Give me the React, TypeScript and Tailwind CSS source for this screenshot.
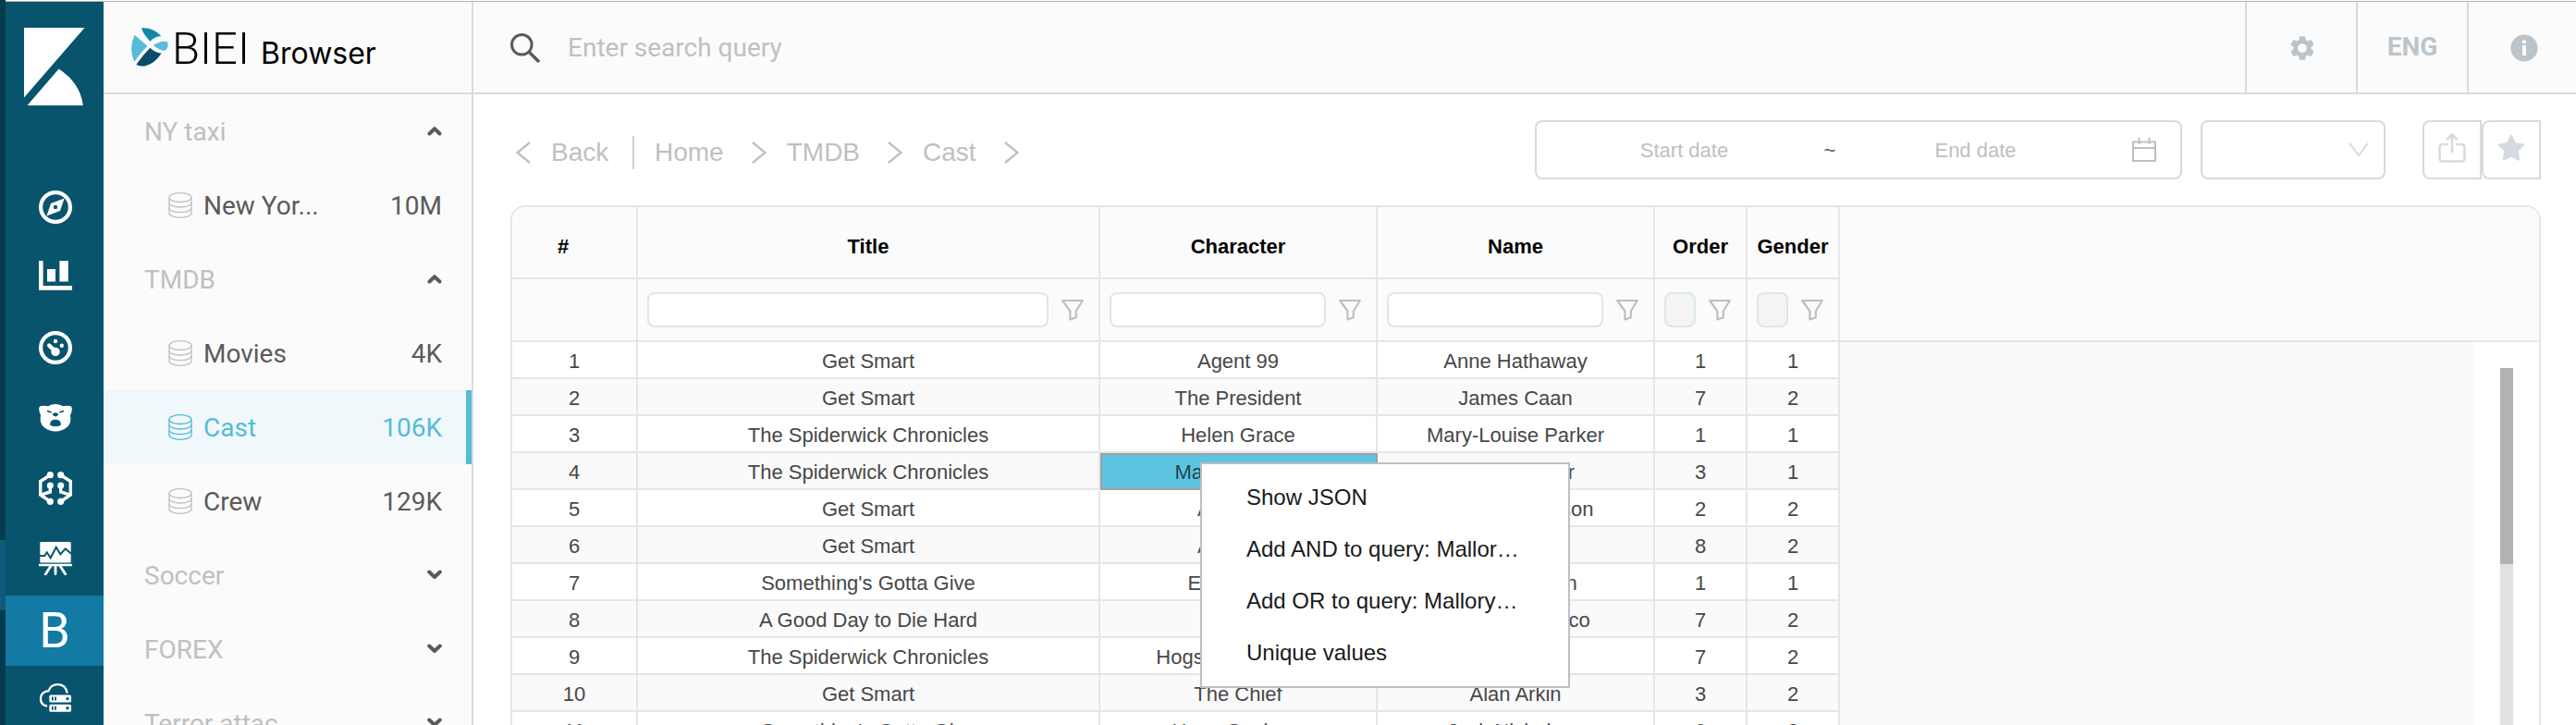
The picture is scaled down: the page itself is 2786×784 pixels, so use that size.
import React from "react";
import { MdSettings } from "react-icons/md";

const NAV_ICON = "h-9 w-9";

function CompassIcon() {
  return (
    <svg className={NAV_ICON} viewBox="0 0 36 36" fill="none">
      <circle cx="18" cy="18" r="15.9" stroke="#fff" strokeWidth="4.2" />
      <path fill="#fff" fillRule="evenodd" d="M27.6 8.4 13 14 8.4 27.6 23 22ZM18 15.8a2.2 2.2 0 1 1 0 4.4 2.2 2.2 0 0 1 0-4.4Z" />
    </svg>
  );
}

function ChartIcon() {
  return (
    <svg className={NAV_ICON} viewBox="0 0 36 36" fill="#fff">
      <path d="M0 0h4.6v27H36v4.7H0ZM9 9h9v13.4H9ZM22.4 0h9.4v22.4h-9.4Z" />
    </svg>
  );
}

function GaugeIcon() {
  return (
    <svg className={NAV_ICON} viewBox="0 0 36 36" fill="none">
      <circle cx="18" cy="18" r="15.9" stroke="#fff" strokeWidth="4.2" />
      <path d="M11.2 15.6 18 22" stroke="#fff" strokeWidth="4.4" strokeLinecap="round" />
      <circle cx="18" cy="22.4" r="4.7" fill="#fff" />
      <circle cx="18" cy="11" r="2.2" fill="#fff" />
      <circle cx="24.8" cy="15.7" r="2.2" fill="#fff" />
    </svg>
  );
}

function BearIcon() {
  return (
    <svg className={NAV_ICON} viewBox="0 -3 36 36">
      <path
        fill="#fff"
        d="M2.5 2Q0 2 .2 6q.3 3.5 1.8 6-1.5 8.500 3 12.500Q11 29.600 18 29.600T31 24.500q4.500-4 3-12.500 1.500-2.500 1.800-6Q36 2 33.500 2 29 1.500 26 2.200 22 0 18 0T10 2.200Q7 1.500 2.500 2Z"
      />
      <path d="M9.500 7.600l3.600 1.200M26.500 7.600l-3.600 1.200" stroke="#09546d" strokeWidth="1.600" strokeLinecap="round" />
      <path fill="#09546d" d="M14.600 11q1.200-1.700 3.400-1.700T21.400 11Q20 13.400 18 13.400T14.600 11ZM12 22q.4-5.200 6-5.200t6 5.200q-1 2-6 2t-6-2Z" />
    </svg>
  );
}

function LearningIcon() {
  return (
    <svg className={NAV_ICON} viewBox="0 0 36 36" fill="#fff">
      <path
        fill="none"
        stroke="#fff"
        strokeWidth="3.4"
        d="M12.300 3.700 1.700 10.500v14.500l10.600 7.300M12.300 15v7L3 24.800M23.700 3.700l10.600 6.800v14.500l-10.600 7.300M23.700 15v7l9.300 2.800"
      />
      <circle cx="12.300" cy="3.700" r="3.600" />
      <circle cx="23.700" cy="3.700" r="3.600" />
      <circle cx="12.300" cy="15" r="3.500" />
      <circle cx="23.700" cy="15" r="3.500" />
      <circle cx="12.300" cy="32.300" r="3.600" />
      <circle cx="23.700" cy="32.300" r="3.600" />
    </svg>
  );
}

function CanvasIcon() {
  return (
    <svg className={NAV_ICON} viewBox="0 0 36 36" fill="none">
      <rect x="1.300" y="0" width="33.400" height="22.400" rx="1.200" fill="#fff" />
      <path d="M0 25h36" stroke="#fff" strokeWidth="2.600" />
      <path d="M13 26 7.200 35M18 26v8.500M23 26l5.800 9" stroke="#fff" strokeWidth="2.800" strokeLinecap="round" />
      <path d="M1 15h5.300l2.400-3.700 4 6 6-11.600 4.600 7.600 5.400-6 6.300 5.400" stroke="#09546d" strokeWidth="2" />
    </svg>
  );
}

function CloudServerIcon() {
  return (
    <svg className={NAV_ICON} viewBox="0 0 36 36">
      <path
        d="M9 25.500Q2 24.500 2 17.700q0-7.500 8.500-8.500Q13 2 20.700 2.200q8.500.5 10 9.300"
        fill="none"
        stroke="#fff"
        strokeWidth="2.300"
      />
      <rect x="11.300" y="13.600" width="23.700" height="8" rx="1.600" fill="#fff" />
      <rect x="11.300" y="23.800" width="23.700" height="8" rx="1.600" fill="#fff" />
      <path d="M14.800 15.600v4M18 15.600v4M14.800 25.800v4M18 25.800v4" stroke="#09546d" strokeWidth="1.800" />
      <circle cx="31" cy="17.600" r="1.700" fill="#09546d" />
      <circle cx="31" cy="27.800" r="1.700" fill="#09546d" />
    </svg>
  );
}

function BrandMark() {
  return (
    <svg className="h-[42px] w-10" viewBox="426 90 120 126">
      <path fill="#1387a8" d="M459 91Q497 88 523 117 500 119 487 134 465 112 459 91Z" />
      <path fill="#56bcd8" d="M437 113 478 149Q455 172 436 200 416 156 437 113Z" />
      <path fill="#56bcd8" d="M498 148Q520 130 543 136 549 148 538 163 524 168 498 148Z" />
      <path fill="#0b4d69" d="M487 155Q502 170 524 173 502 205 472 214 455 217 442 209 462 180 487 155Z" />
    </svg>
  );
}

function DatabaseIcon({ active }: { active?: boolean }) {
  return (
    <svg
      className={active ? "h-7 w-[26px] text-[#55bcd8]" : "h-7 w-[26px] text-[#c0c0c0]"}
      viewBox="0 0 26 28"
      fill="none"
      stroke="currentColor"
      strokeWidth="1.3"
    >
      <ellipse cx="13" cy="5.600" rx="12" ry="4.900" />
      <path d="M1 5.600v17c0 2.600 5.400 4.700 12 4.700s12-2.100 12-4.700v-17" />
      <path d="M1 11.300c0 2.600 5.400 4.700 12 4.700s12-2.100 12-4.700M1 17c0 2.600 5.400 4.700 12 4.700S25 19.600 25 17" />
    </svg>
  );
}

function Chevron({ up }: { up?: boolean }) {
  return (
    <svg className="h-4 w-4" viewBox="0 0 16 16" fill="none" stroke="#5a5a5a" strokeWidth="4" strokeLinecap="round" strokeLinejoin="round">
      <path d={up ? "M2.500 10.500 8 5.200l5.500 5.300" : "M2.200 4.500 8 10l5.800-5.500"} />
    </svg>
  );
}

function Angle({ left }: { left?: boolean }) {
  return (
    <svg className="h-6 w-4" viewBox="0 0 16 24" fill="none" stroke="#c0c0c0" strokeWidth="2.4">
      <path d={left ? "M15 1 1.500 12 15 23" : "M1 1l13.500 11L1 23"} />
    </svg>
  );
}

function FunnelIcon() {
  return (
    <svg className="h-6 w-6" viewBox="0 0 24 24" fill="none" stroke="#bfbfbf" strokeWidth="2.2" strokeLinejoin="round">
      <path d="M1.200 2h21.600l-7 11.500v6.800L9.400 22.500V13.500Z" />
    </svg>
  );
}

type Item = { name: string; count: string; active?: boolean };

const GROUPS: { name: string; open: boolean; items: Item[] }[] = [
  { name: "NY taxi", open: true, items: [{ name: "New Yor...", count: "10M" }] },
  {
    name: "TMDB",
    open: true,
    items: [
      { name: "Movies", count: "4K" },
      { name: "Cast", count: "106K", active: true },
      { name: "Crew", count: "129K" },
    ],
  },
  { name: "Soccer", open: false, items: [] },
  { name: "FOREX", open: false, items: [] },
  { name: "Terror attac", open: false, items: [] },
];

const COLUMNS = [
  { name: "Title", disabled: false },
  { name: "Character", disabled: false },
  { name: "Name", disabled: false },
  { name: "Order", disabled: true },
  { name: "Gender", disabled: true },
];

const ROWS: string[][] = [
  ["Get Smart", "Agent 99", "Anne Hathaway", "1", "1"],
  ["Get Smart", "The President", "James Caan", "7", "2"],
  ["The Spiderwick Chronicles", "Helen Grace", "Mary-Louise Parker", "1", "1"],
  ["The Spiderwick Chronicles", "Mallory Grace", "Sarah Bolger", "3", "1"],
  ["Get Smart", "Agent 23", "Dwayne Johnson", "2", "2"],
  ["Get Smart", "Agent 91", "Terry Crews", "8", "2"],
  ["Something's Gotta Give", "Erica Barry", "Diane Keaton", "1", "1"],
  ["A Good Day to Die Hard", "Murphy", "Amaury Nolasco", "7", "2"],
  ["The Spiderwick Chronicles", "Hogsqueal (voice)", "Seth Rogen", "7", "2"],
  ["Get Smart", "The Chief", "Alan Arkin", "3", "2"],
  ["Something's Gotta Give", "Harry Sanborn", "Jack Nicholson", "0", "2"],
];

const MENU = ["Show JSON", "Add AND to query: Mallor…", "Add OR to query: Mallory…", "Unique values"];

const APPS = [
  { name: "Discover", Icon: CompassIcon },
  { name: "Visualize", Icon: ChartIcon },
  { name: "Dashboard", Icon: GaugeIcon },
  { name: "Timelion", Icon: BearIcon },
  { name: "Machine learning", Icon: LearningIcon },
  { name: "Canvas", Icon: CanvasIcon },
];

function AppRail() {
  return (
    <nav aria-label="Applications" className="flex w-[106px] shrink-0 flex-col bg-[#09546d]">
      <a href="#home" aria-label="Kibana" className="block h-[186px] shrink-0 pl-5 pt-7">
        <svg className="h-[84px] w-[66px]" viewBox="0 0 66 84" fill="#fff">
          <path d="M0 0h65.500L0 75.500ZM37.600 44.600Q61 60 63.800 84H3.500Z" />
        </svg>
      </a>
      {APPS.map(({ name, Icon }) => (
        <a key={name} href="#app" aria-label={name} className="flex h-[76px] shrink-0 items-center justify-center pb-1 pl-0.5">
          <Icon />
        </a>
      ))}
      <a href="#browser" className="flex h-[76px] shrink-0 items-center justify-center bg-[#127aa3] text-[54px] leading-none text-white">
        B
      </a>
      <a href="#infra" aria-label="Infrastructure" className="flex h-[76px] shrink-0 items-center justify-center pb-1 pl-0.5">
        <CloudServerIcon />
      </a>
    </nav>
  );
}

function Sidebar() {
  return (
    <aside className="w-[400px] shrink-0 overflow-hidden border-r-2 border-[#d6dbe2] bg-[#fbfbfb] text-[28px] text-[#5a5a5a]">
      {GROUPS.map((group) => (
        <section key={group.name}>
          <button type="button" aria-expanded={group.open} className="flex h-20 w-full items-center justify-between pl-11 pr-8 text-[#c0c0c0]">
            <span className="pt-0.5">{group.name}</span>
            <Chevron up={group.open} />
          </button>
          {group.items.map((item) => (
            <a
              key={item.name}
              href="#index"
              className={
                item.active
                  ? "flex h-20 items-center border-r-[6px] border-[#55bcd8] bg-[#f0f8fb] pl-[70px] pr-[26px] text-[#55bcd8]"
                  : "flex h-20 items-center pl-[70px] pr-8"
              }
            >
              <DatabaseIcon active={item.active} />
              <span className="ml-3 pt-0.5">{item.name}</span>
              <span className="ml-auto pt-0.5">{item.count}</span>
            </a>
          ))}
        </section>
      ))}
    </aside>
  );
}

function Header() {
  return (
    <header className="flex h-[100px] shrink-0 border-b-2 border-[#d6dbe2] bg-[#fbfbfb]">
      <div className="flex w-[400px] shrink-0 items-center border-r-2 border-[#d6dbe2] pl-[30px] text-black">
        <BrandMark />
        <span className="flex items-baseline gap-3 pl-1 pt-0.5">
          <span className="text-[49px] font-light leading-none">BIEI</span>
          <span className="font-['Inter',sans-serif] text-[32px] leading-none">Browser</span>
        </span>
      </div>
      <label className="flex min-w-0 flex-1 items-center pl-10 pt-0.5">
        <svg className="h-8 w-8" viewBox="0 0 32 32" fill="none" stroke="#5a5a5a" strokeWidth="3">
          <circle cx="12.300" cy="12.300" r="10.800" />
          <path d="M20 20l11 11" strokeWidth="3.400" />
        </svg>
        <input
          type="text"
          aria-label="Search"
          placeholder="Enter search query"
          className="ml-[30px] min-w-0 flex-1 bg-transparent text-[28px] text-[#5a5a5a] outline-none placeholder:text-[#c0c0c0]"
        />
      </label>
      <button type="button" aria-label="Settings" className="flex w-[120px] items-center justify-center border-l-2 border-[#d6dbe2] pl-0.5 pt-0.5">
        <MdSettings className="h-8 w-8 text-[#bcc4cb]" />
      </button>
      <button type="button" className="w-[120px] border-l-2 border-[#d6dbe2] text-[28px] font-bold text-[#bcc4cb]">
        ENG
      </button>
      <button type="button" aria-label="Information" className="flex w-[118px] items-center justify-center border-l-2 border-[#d6dbe2] pl-1 pt-0.5">
        <svg className="h-[30px] w-[30px]" viewBox="0 0 30 30">
          <circle cx="15" cy="15" r="14.600" fill="#bcc4cb" />
          <circle cx="15" cy="8.300" r="2.100" fill="#fff" />
          <path d="M15 12v11" stroke="#fff" strokeWidth="3.800" />
        </svg>
      </button>
    </header>
  );
}

function Toolbar() {
  return (
    <div className="flex h-[120px] shrink-0 items-center">
      <nav aria-label="Breadcrumb" className="flex items-center pl-1.5 pt-1.5 text-[28px] text-[#c0c0c0]">
        <a href="#back" className="flex w-[126px] items-center gap-[22px]">
          <Angle left />
          Back
        </a>
        <span className="h-9 w-0.5 bg-[#d0d0d0]" />
        {["Home", "TMDB", "Cast"].map((crumb) => (
          <span key={crumb} className="flex items-center">
            <a href="#crumb" className="pl-[22px]">
              {crumb}
            </a>
            <span className="pl-[30px]">
              <Angle />
            </span>
          </span>
        ))}
      </nav>

      <div className="ml-auto flex h-16 w-[700px] items-center rounded-lg border-2 border-[#d6dbe2] pl-3.5 pr-[26px] text-[22px] text-[#5a5a5a]">
        <input aria-label="Start date" placeholder="Start date" className="min-w-0 flex-1 bg-transparent text-center outline-none placeholder:text-[#bfbfbf]" />
        <span className="w-6 text-center">~</span>
        <input aria-label="End date" placeholder="End date" className="min-w-0 flex-1 bg-transparent text-center outline-none placeholder:text-[#bfbfbf]" />
        <svg className="ml-6 h-[26px] w-[26px]" viewBox="0 0 26 26" fill="none" stroke="#bfbfbf" strokeWidth="2">
          <path d="M1 4.500h24V25H1ZM1 11h24M7.500 0v7M18.500 0v7" />
        </svg>
      </div>

      <div className="relative ml-5">
        <select aria-label="Interval" className="block h-16 w-[200px] appearance-none rounded-lg border-2 border-[#d9d9d9] bg-white" />
        <svg className="pointer-events-none absolute right-[18px] top-6 h-4 w-[22px]" viewBox="0 0 22 16" fill="none" stroke="#d6dbe2" strokeWidth="2">
          <path d="M1 1l10 13L21 1" />
        </svg>
      </div>

      <div className="ml-10 flex">
        <button type="button" aria-label="Share" className="flex h-16 w-16 items-center justify-center rounded-l-lg border-2 border-[#d6dbe2] pb-1">
          <svg className="h-8 w-[30px]" viewBox="0 0 30 32" fill="none" stroke="#d6dbe2" strokeWidth="2.600" strokeLinecap="round" strokeLinejoin="round">
            <path d="M10 12H5q-3.500 0-3.500 3.500v11.500q0 3.500 3.500 3.500h20q3.500 0 3.500-3.500V15.500q0-3.500-3.500-3.500h-5M15 20V1.800M10 6.500l5-5 5 5" />
          </svg>
        </button>
        <button type="button" aria-label="Favourite" className="flex h-16 w-16 items-center justify-center rounded-l-lg border-2 border-[#d6dbe2] pb-1">
          <svg className="h-[30px] w-[30px]" viewBox="0 0 30 30" fill="#d6dbe2" stroke="#d6dbe2" strokeWidth="2.400" strokeLinejoin="round">
            <path d="M15 2l4 8.300 9 1.300-6.500 6.400 1.500 9.500-8-4.300-8 4.300L8.500 18 2 11.600l9-1.300Z" />
          </svg>
        </button>
      </div>
    </div>
  );
}

function ContextMenu() {
  return (
    <ul
      role="menu"
      className="absolute left-[108px] top-2.5 z-10 w-[400px] border-2 border-[#b9c0c6] bg-white py-2 text-left text-2xl text-[#1a1a1a]"
    >
      {MENU.map((entry) => (
        <li key={entry} role="none">
          <button type="button" role="menuitem" className="block h-14 w-full whitespace-nowrap px-12 text-left">
            {entry}
          </button>
        </li>
      ))}
    </ul>
  );
}

function CastTable() {
  return (
    <table className="w-[1436px] shrink-0 table-fixed border-separate border-spacing-0 text-center text-[22px] leading-7 text-[#474747]">
      <colgroup>
        <col className="w-[136px]" />
        <col className="w-[500px]" />
        <col className="w-[300px]" />
        <col className="w-[300px]" />
        <col className="w-[100px]" />
        <col className="w-[100px]" />
      </colgroup>
      <thead className="bg-[#fbfbfb]">
        <tr>
          <th className="h-[78px] border-b-2 border-r-2 border-[#e6e6e6] p-0 pr-6 pt-2.5 text-black">#</th>
          {COLUMNS.map((column) => (
            <th key={column.name} className="h-[78px] border-b-2 border-r-2 border-[#e6e6e6] p-0 pt-2.5 text-black">
              {column.name}
            </th>
          ))}
        </tr>
        <tr>
          <td className="h-[68px] border-b-2 border-r-2 border-[#e6e6e6] p-0" />
          {COLUMNS.map((column) => (
            <td key={column.name} className="h-[68px] border-b-2 border-r-2 border-[#e6e6e6] p-0">
              <div className="flex items-center gap-3.5 pl-2.5 pr-4">
                <input
                  aria-label={"Filter " + column.name}
                  disabled={column.disabled}
                  className="h-[38px] min-w-0 flex-1 rounded-lg border-2 border-[#dbe7ee] bg-white px-1 outline-none disabled:bg-[#f4f4f4]"
                />
                <button type="button" aria-label={"Filter options for " + column.name}>
                  <FunnelIcon />
                </button>
              </div>
            </td>
          ))}
        </tr>
      </thead>
      <tbody>
        {ROWS.map((row, index) => (
          <tr key={index} className="bg-white even:bg-[#fafafa]">
            <td className="h-10 border-b-2 border-r-2 border-[#e6e6e6] p-0 pt-1">{index + 1}</td>
            {row.map((value, col) =>
              index === 3 && col === 1 ? (
                <td
                  key={col}
                  className="relative h-10 border-b-2 border-r-2 border-[#e6e6e6] bg-[#5cc4de] bg-clip-padding p-0 pt-1 text-[#254650] outline-2 -outline-offset-2 outline-[#a0a0a0]"
                >
                  {value}
                  <ContextMenu />
                </td>
              ) : (
                <td key={col} className="h-10 border-b-2 border-r-2 border-[#e6e6e6] p-0 pt-1">
                  {value}
                </td>
              ),
            )}
          </tr>
        ))}
      </tbody>
    </table>
  );
}

export default function App() {
  return (
    <div className="flex h-screen overflow-hidden bg-white font-['Roboto',sans-serif]">
      <div className="flex w-1.5 shrink-0 flex-col bg-[#043b4e] pt-[584px]">
        <div className="h-[76px] shrink-0 bg-[#0e5c7a]" />
      </div>
      <div className="flex min-w-0 flex-1 flex-col pt-px">
        <div className="flex min-h-0 flex-1 border-t border-[#b0b4b4]">
          <AppRail />
          <div className="flex min-w-0 flex-1 flex-col">
            <Header />
            <div className="flex min-h-0 flex-1">
              <Sidebar />
              <main className="flex min-w-0 flex-1 flex-col pl-10 pr-[38px] font-['Liberation_Sans',Arial,sans-serif]">
                <Toolbar />
                <div className="flex min-h-0 flex-1 items-stretch overflow-hidden rounded-t-2xl border-2 border-b-0 border-[#e6e6e6]">
                  <div className="shrink-0">
                    <CastTable />
                  </div>
                  <div className="flex min-w-0 flex-1 flex-col">
                    <div className="h-[146px] shrink-0 border-b-2 border-[#e6e6e6] bg-[#fbfbfb]" />
                    <div className="flex min-h-0 flex-1 bg-[#fafafa]">
                      <div className="ml-auto flex w-[70px] justify-center bg-white pt-7">
                        <div className="w-3.5 bg-[#e1e1e1]">
                          <div className="h-[212px] bg-[#b2b2b2]" />
                        </div>
                      </div>
                    </div>
                  </div>
                </div>
              </main>
            </div>
          </div>
        </div>
      </div>
    </div>
  );
}
